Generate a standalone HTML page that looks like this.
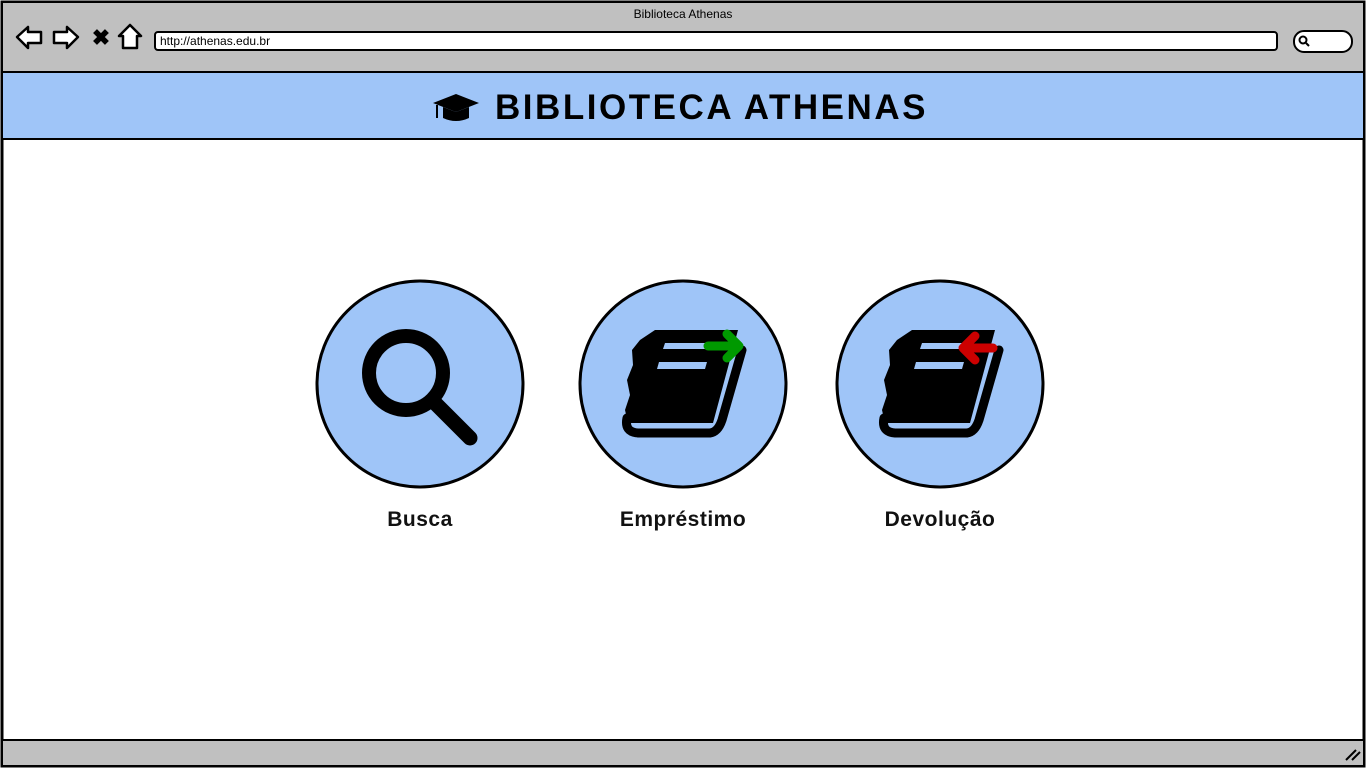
<!DOCTYPE html>
<html><head><meta charset="utf-8"><style>
body{margin:0;width:1366px;height:768px;overflow:hidden;background:#fff;font-family:"Comic Sans MS","Liberation Sans",sans-serif;}
.lbl{position:absolute;font-weight:bold;font-size:21px;color:#111;text-align:center;width:200px;letter-spacing:0.5px}
</style></head><body>
<svg width="1366" height="768" style="position:absolute;left:0;top:0">
<rect x="2" y="2" width="1362" height="764" fill="#fff" stroke="#000" stroke-width="3"/>
<rect x="3" y="3" width="1360" height="69" fill="#c0c0c0"/>
<line x1="2" y1="72" x2="1364" y2="72" stroke="#000" stroke-width="2"/>
<rect x="3" y="73" width="1360" height="66" fill="#9fc5f8"/>
<line x1="2" y1="139" x2="1364" y2="139" stroke="#000" stroke-width="2"/>
<rect x="3" y="740" width="1360" height="25" fill="#c0c0c0"/>
<line x1="2" y1="740" x2="1364" y2="740" stroke="#000" stroke-width="2"/>
<text x="683" y="18" font-size="12" text-anchor="middle" font-family="Liberation Sans">Biblioteca Athenas</text>
<g fill="#fff" stroke="#000" stroke-width="2.5" stroke-linejoin="round">
<path d="M17 37 L28 27 L28 32 L41 32 L41 43 L28 43 L28 48 Z"/>
<path d="M78 37 L67 27 L67 32 L54 32 L54 43 L67 43 L67 48 Z"/>
<path d="M130 25 L141 36 L137 36 L137 48 L123 48 L123 36 L119 36 Z"/>
</g>
<text x="101" y="45" font-size="22" font-weight="bold" text-anchor="middle" font-family="Liberation Sans">✖</text>
<rect x="155" y="32" width="1122" height="18" rx="3" fill="#fff" stroke="#000" stroke-width="2"/>
<text x="160" y="45" font-size="12" font-family="Liberation Sans">http://athenas.edu.br</text>
<rect x="1294" y="31" width="58" height="21" rx="10" fill="#fff" stroke="#000" stroke-width="2"/>
<circle cx="1303" cy="40" r="3.5" fill="none" stroke="#000" stroke-width="2"/><line x1="1306" y1="43" x2="1309" y2="46" stroke="#000" stroke-width="2"/>
<path d="M1346 760 L1356 750 M1352 760 L1360 752" stroke="#000" stroke-width="2"/>
<path d="M433 103 L456 94 L479 103 L456 112 Z" fill="#000"/>
<path d="M443 107 L443 118 Q456 124 469 118 L469 107 L456 112 Z" fill="#000"/>
<line x1="437" y1="105" x2="437" y2="118" stroke="#000" stroke-width="2"/>
<text x="711" y="119" font-size="35" font-weight="bold" text-anchor="middle" font-family="Liberation Sans" letter-spacing="1.5" textLength="432">BIBLIOTECA ATHENAS</text>
<g fill="#9fc5f8" stroke="#000" stroke-width="3">
<circle cx="420" cy="384" r="103"/><circle cx="683" cy="384" r="103"/><circle cx="940" cy="384" r="103"/>
</g>
<circle cx="406" cy="373" r="37" fill="none" stroke="#000" stroke-width="14"/>
<line x1="434" y1="402" x2="470" y2="438" stroke="#000" stroke-width="15" stroke-linecap="round"/>
<g id="book">
<path d="M655 330 L738 330 L713 423 L628 423 L625 410 L630 395 L627 380 L633 365 L632 350 L640 340 Z" fill="#000"/>
<path d="M627 418 Q624 432 638 433 L710 433 Q718 432 722 420 L742 350" fill="none" stroke="#000" stroke-width="9" stroke-linecap="round"/>
<path d="M665 343 L713 343 L711 349 L663 349 Z" fill="#9fc5f8"/>
<path d="M659 362 L707 362 L705 369 L657 369 Z" fill="#9fc5f8"/>
</g>
<use href="#book" x="257"/>
<path d="M708 346 L738 346 M727 334 L739 346 L727 358" fill="none" stroke="#009900" stroke-width="9" stroke-linecap="round" stroke-linejoin="round"/>
<path d="M993 348 L963 348 M975 336 L963 348 L975 360" fill="none" stroke="#cc0000" stroke-width="9" stroke-linecap="round" stroke-linejoin="round"/>
</svg>
<div class="lbl" style="left:320px;top:508px">Busca</div>
<div class="lbl" style="left:583px;top:508px">Empréstimo</div>
<div class="lbl" style="left:840px;top:508px">Devolução</div>
</body></html>
